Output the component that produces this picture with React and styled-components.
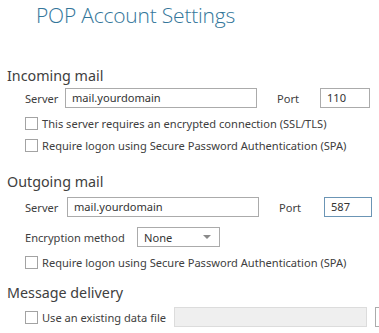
import React from 'react';
import styled, { createGlobalStyle } from 'styled-components';

const GlobalStyle = createGlobalStyle`
  html, body {
    margin: 0;
    padding: 0;
    background: #ffffff;
  }
  body {
    font-family: 'Noto Sans', 'Open Sans', sans-serif;
    color: #444444;
    width: 379px;
    height: 333px;
    overflow: hidden;
  }
`;

const Page = styled.div`
  width: 379px;
  height: 333px;
  overflow: hidden;
`;

const Title = styled.h1`
  margin: 0;
  padding-left: 36px;
  height: 31px;
  line-height: 31px;
  font-family: 'Open Sans', 'Noto Sans', sans-serif;
  font-weight: 300;
  font-size: 21px;
  letter-spacing: -0.2px;
  color: #33769a;
  white-space: nowrap;
`;

const SectionTitle = styled.h2`
  margin: ${(p) => p.$top}px 0 0;
  padding-left: 7px;
  height: 20px;
  line-height: 20px;
  font-family: 'Noto Sans', sans-serif;
  font-weight: 400;
  font-size: 14.3px;
  color: #404040;
  white-space: nowrap;
`;

const Row = styled.div`
  display: flex;
  align-items: center;
  height: 20px;
  margin-top: ${(p) => p.$top || 0}px;
  padding-left: 25px;
  font-size: 11.1px;
  white-space: nowrap;
`;

const Label = styled.span`
  color: #404040;
  width: ${(p) => (p.$width ? `${p.$width}px` : 'auto')};
  flex: none;
`;

const TextBox = styled.div`
  box-sizing: border-box;
  width: ${(p) => p.$width}px;
  height: 20px;
  flex: none;
  margin-left: ${(p) => p.$left || 0}px;
  border: 1px solid #ababab;
  border-color: ${(p) => (p.$disabled ? '#dcdcdc' : p.$focus ? '#6b95b5' : '#ababab')};
  background: ${(p) => (p.$disabled ? '#efefef' : '#ffffff')};
  padding-left: 6px;
  line-height: 18px;
  font-size: 11.1px;
  color: #333333;
`;

const Select = styled.div`
  box-sizing: border-box;
  display: flex;
  align-items: center;
  justify-content: space-between;
  width: 83px;
  height: 20px;
  padding: 0 8px 0 6px;
  border: 1px solid #ababab;
  font-size: 11.1px;
  color: #333333;
`;

const Arrow = styled.span`
  width: 0;
  height: 0;
  border-left: 4px solid transparent;
  border-right: 4px solid transparent;
  border-top: 4px solid #8a8a8a;
`;

const Box = styled.span`
  box-sizing: border-box;
  width: 13px;
  height: 13px;
  flex: none;
  border: 1px solid #a3a3a3;
  background: #ffffff;
  margin-right: 4px;
`;

const CheckText = styled.span`
  color: #404040;
  width: ${(p) => (p.$width ? `${p.$width}px` : 'auto')};
  flex: none;
`;

function Check({ children, top }) {
  return (
    <Row $top={top}>
      <Box />
      <CheckText>{children}</CheckText>
    </Row>
  );
}

function ServerRow({ top, port, focus, shift }) {
  return (
    <Row $top={top}>
      <Label $width={40 + shift}>Server</Label>
      <TextBox $width={192}>mail.yourdomain</TextBox>
      <Label $width={43 + shift} style={{ paddingLeft: 20 }}>
        Port
      </Label>
      <TextBox $width={50 - shift} $focus={focus}>
        {port}
      </TextBox>
    </Row>
  );
}

export default function App() {
  return (
    <Page>
      <GlobalStyle />
      <Title>POP Account Settings</Title>

      <SectionTitle $top={35}>Incoming mail</SectionTitle>
      <ServerRow top={2} port="110" shift={0} />
      <Check top={5}>This server requires an encrypted connection (SSL/TLS)</Check>
      <Check top={2}>Require logon using Secure Password Authentication (SPA)</Check>

      <SectionTitle $top={17}>Outgoing mail</SectionTitle>
      <ServerRow top={5} port="587" shift={2} focus />
      <Row $top={10}>
        <Label $width={112}>Encryption method</Label>
        <Select>
          None
          <Arrow />
        </Select>
      </Row>
      <Check top={5}>Require logon using Secure Password Authentication (SPA)</Check>

      <SectionTitle $top={11}>Message delivery</SectionTitle>
      <Row $top={4}>
        <Box />
        <CheckText $width={132}>Use an existing data file</CheckText>
        <TextBox $width={193} $disabled />
        <TextBox $width={20} $left={8} />
      </Row>
    </Page>
  );
}
